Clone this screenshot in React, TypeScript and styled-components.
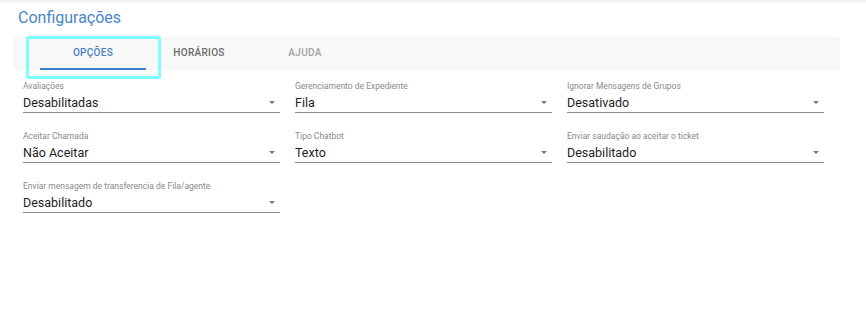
import styled, { createGlobalStyle } from "styled-components";

const GlobalStyle = createGlobalStyle`
  html, body {
    margin: 0;
    padding: 0;
    background: #fff;
    font-family: Roboto, "Liberation Sans", sans-serif;
  }
`;

type Option = { label: string; value: string };

const options: Option[] = [
  { label: "Avaliações", value: "Desabilitadas" },
  { label: "Gerenciamento de Expediente", value: "Fila" },
  { label: "Ignorar Mensagens de Grupos", value: "Desativado" },
  { label: "Aceitar Chamada", value: "Não Aceitar" },
  { label: "Tipo Chatbot", value: "Texto" },
  { label: "Enviar saudação ao aceitar o ticket", value: "Desabilitado" },
  { label: "Enviar mensagem de transferencia de Fila/agente", value: "Desabilitado" },
];

const tabs = ["OPÇÕES", "HORÁRIOS", "AJUDA"];

const App = () => {
  return (
    <>
      <GlobalStyle />
      <TopShadow />
      <Container>
        <Title>Configurações</Title>
        <TabBar>
          {tabs.map((t, i) => (
            <Tab key={t} $active={i === 0} $disabled={i === 2}>
              {t}
              {i === 0 && <Indicator />}
              {i === 0 && <FocusRing />}
            </Tab>
          ))}
        </TabBar>
        <Grid>
          {options.map((o) => (
            <Field key={o.label}>
              <Label>{o.label}</Label>
              <Select>
                <Value>{o.value}</Value>
                <Arrow />
              </Select>
            </Field>
          ))}
        </Grid>
      </Container>
    </>
  );
};

export default App;

const TopShadow = styled.div`
  height: 3px;
  background: linear-gradient(#ececec, #fafafa);
`;
const Container = styled.div`
  padding: 0 26px 0 13px;
`;
const Title = styled.h1`
  margin: 4px 0 0 5px;
  font-size: 16px;
  font-weight: 400;
  color: #4a86c8;
  line-height: 22px;
`;
const TabBar = styled.div`
  margin-top: 8px;
  height: 33px;
  background: #f8f8f8;
  border-radius: 3px;
  display: flex;
  padding-left: 27px;
`;
const Tab = styled.div<{ $active?: boolean; $disabled?: boolean }>`
  position: relative;
  width: 106px;
  display: flex;
  align-items: center;
  justify-content: center;
  font-size: 10px;
  font-weight: 500;
  letter-spacing: 0.3px;
  padding-bottom: 2px;
  color: ${(p) => (p.$active ? "#4a7fc0" : p.$disabled ? "#a3a3a3" : "#6a6a6a")};
`;
const Indicator = styled.div`
  position: absolute;
  left: 0;
  right: 0;
  bottom: 0;
  height: 2px;
  background: #3f7fd2;
`;
const FocusRing = styled.div`
  position: absolute;
  left: -14px;
  top: -1px;
  width: 135px;
  height: 43px;
  box-sizing: border-box;
  border: 3px solid #80ffff;
  border-radius: 2px;
`;
const Grid = styled.div`
  display: grid;
  grid-template-columns: repeat(3, 257px);
  column-gap: 15px;
  row-gap: 18px;
  padding: 11px 0 0 10px;
`;
const Field = styled.div`
  display: flex;
  flex-direction: column;
`;
const Label = styled.div`
  font-size: 8.5px;
  color: #8a8a8a;
  line-height: 11px;
`;
const Select = styled.div`
  display: flex;
  align-items: center;
  justify-content: space-between;
  height: 20px;
  border-bottom: 1px solid #8c8c8c;
`;
const Value = styled.div`
  font-size: 12.5px;
  color: #1e1e1e;
`;
const Arrow = styled.div`
  width: 0;
  height: 0;
  margin-right: 5px;
  border-left: 3.5px solid transparent;
  border-right: 3.5px solid transparent;
  border-top: 3.5px solid #757575;
`;
